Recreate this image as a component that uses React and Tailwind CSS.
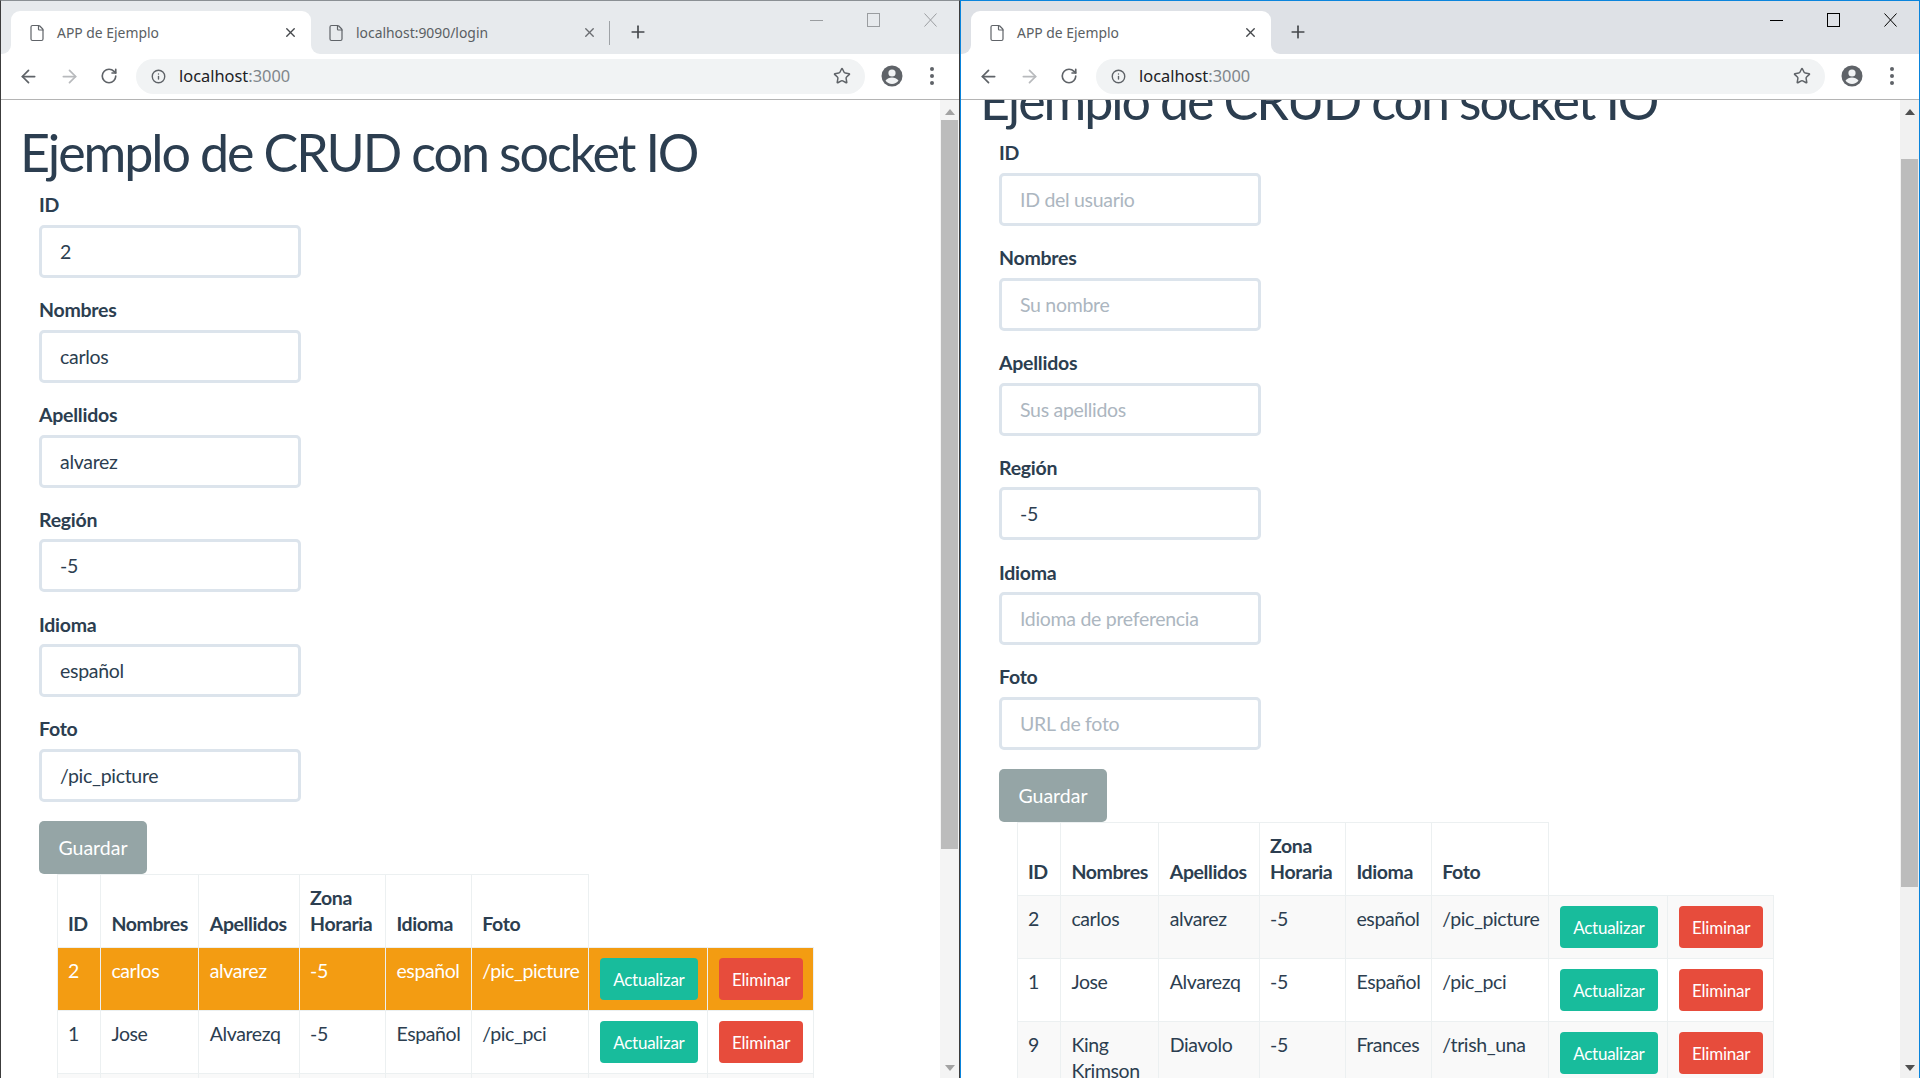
import React from "react";
import { ArrowLeft, ArrowRight, RotateCw, Info, Star, X, Plus, File } from "lucide-react";

const sans = "font-['Noto_Sans','Open_Sans',sans-serif]";

function Avatar() {
  return (
    <svg width="22" height="22" viewBox="0 0 22 22">
      <circle cx="11" cy="11" r="10.5" fill="#5f6368" />
      <circle cx="11" cy="8" r="3.6" fill="#f1f3f4" />
      <path d="M4.5 15.6c1.6-2.4 4-3.2 6.5-3.2s4.9.8 6.5 3.2c-1.5 2.2-3.8 3.4-6.5 3.4s-5-1.2-6.5-3.4z" fill="#f1f3f4" />
    </svg>
  );
}

function Dots() {
  return (
    <svg width="6" height="20" viewBox="0 0 6 20" fill="#5f6368">
      <circle cx="3" cy="3" r="2" />
      <circle cx="3" cy="10" r="2" />
      <circle cx="3" cy="17" r="2" />
    </svg>
  );
}

function Tab({ title, active, strip, closeColor }) {
  return (
    <div className={`relative h-[43px] shrink-0 flex items-center ${active ? "w-[300px] pl-[17px] bg-white rounded-t-[9px]" : "w-[298px] pl-[16px]"}`}>
      {active && (
        <>
          <span className="absolute -left-[9px] bottom-0 w-[9px] h-[9px] bg-white">
            <span className={`block w-full h-full rounded-br-[9px] ${strip}`} />
          </span>
          <span className="absolute -right-[9px] bottom-0 w-[9px] h-[9px] bg-white">
            <span className={`block w-full h-full rounded-bl-[9px] ${strip}`} />
          </span>
        </>
      )}
      <File size={18} strokeWidth={1.6} className="text-[#5f6368] shrink-0" />
      <span className={`ml-[11px] mt-[1px] text-[13.9px] text-[#5a5e63] ${sans}`}>{title}</span>
      <X size={15} strokeWidth={2.2} className={`absolute top-[14px] ${active ? "right-[13px]" : "right-[12px]"} ${closeColor}`} />
    </div>
  );
}

function Browser({ focused, tabs, plusGap }) {
  const strip = focused ? "bg-[#dee1e6]" : "bg-[#e7eaed]";
  const ctl = focused ? "#000000" : "#9a9da0";
  return (
    <div className="h-[99px] shrink-0 flex flex-col">
      <div className={`h-[53px] shrink-0 flex ${strip}`}>
        <div className="flex items-end pl-[10px]">
          <Tab title="APP de Ejemplo" active strip={strip} closeColor="text-[#45484c]" />
          {tabs && (
            <>
              <Tab title="localhost:9090/login" strip={strip} closeColor="text-[#6a6d71]" />
              <span className="w-px h-[24px] bg-[#9ea2a6] mb-[9px]" />
            </>
          )}
          <Plus size={20} strokeWidth={2} className={`mb-[12px] ${plusGap} text-[#45484c]`} />
        </div>
        <div className="ml-auto flex items-start pt-[12px] pr-[22px] gap-[44px]">
          <svg width="13" height="14" viewBox="0 0 13 14"><path d="M0 7.5h13" stroke={ctl} strokeWidth="1" /></svg>
          <svg width="13" height="14" viewBox="0 0 13 14" fill="none"><rect x="0.5" y="0.5" width="12" height="13" stroke={ctl} /></svg>
          <svg width="13" height="14" viewBox="0 0 13 14" fill="none"><path d="M0.5 0.5l12 13M12.5 0.5l-12 13" stroke={ctl} /></svg>
        </div>
      </div>
      <div className="h-[46px] shrink-0 bg-white border-b border-[#b4b4b4] flex items-center pb-[1px]">
        <div className="flex items-center pl-[17px] w-[135px] shrink-0">
          <ArrowLeft size={21} strokeWidth={2} className="text-[#5f6368]" />
          <ArrowRight size={21} strokeWidth={2} className="text-[#b8babd] ml-[20px]" />
          <RotateCw size={18} strokeWidth={2.2} className="text-[#5f6368] ml-[20px]" />
        </div>
        <div className="w-[729px] h-[35px] shrink-0 bg-[#f1f3f4] rounded-full flex items-center pl-[15px] pr-[14px]">
          <Info size={15} strokeWidth={2.2} className="text-[#5f6368] shrink-0" />
          <span className={`ml-[13px] text-[16.4px] text-[#202124] ${sans}`}>localhost<span className="text-[#80868b]">:3000</span></span>
          <Star size={18} strokeWidth={2} className="ml-auto text-[#5f6368]" />
        </div>
        <div className="ml-[16px]"><Avatar /></div>
        <div className="ml-[26px]"><Dots /></div>
      </div>
    </div>
  );
}

function Field({ label, value, placeholder }) {
  return (
    <div className="mb-[19.1px]">
      <label className="block h-[26px] mb-[6.8px] text-[19.5px] leading-[26px] font-bold tracking-[-0.25px]">{label}</label>
      <input
        readOnly
        defaultValue={value}
        placeholder={placeholder}
        className="block w-[262px] h-[53px] px-[18px] border-[3px] border-[#dce4ec] rounded-[5px] bg-white text-[19.5px] tracking-[-0.3px] text-[#2c3e50] placeholder:text-[#acb6c0] outline-none font-['Lato',sans-serif]"
      />
    </div>
  );
}

const rows = [
  ["2", "carlos", "alvarez", "-5", "español", "/pic_picture"],
  ["1", "Jose", "Alvarezq", "-5", "Español", "/pic_pci"],
  ["9", <>King<br />Krimson</>, "Diavolo", "-5", "Frances", "/trish_una"],
];

function CrudTable({ highlight }) {
  const td = "border border-[#ecf0f1] px-[10.4px] py-[10px] align-top whitespace-nowrap";
  const th = "border border-[#ecf0f1] px-[10.4px] py-[10px] align-bottom text-left font-bold whitespace-nowrap";
  return (
    <table className="table-fixed w-[757px] border-collapse text-[19.5px] leading-[26px] ml-[17.5px] tracking-[-0.4px]">
      <thead>
        <tr>
          <th className={`${th} w-[43.5px]`}>ID</th>
          <th className={`${th} w-[98.4px]`}>Nombres</th>
          <th className={`${th} w-[100.3px]`}>Apellidos</th>
          <th className={`${th} w-[86.4px]`}>Zona<br />Horaria</th>
          <th className={`${th} w-[85.9px]`}>Idioma</th>
          <th className={`${th} w-[117.5px]`}>Foto</th>
          <th className="p-0 border-0 w-[119px]" />
          <th className="p-0 border-0 w-[106px]" />
        </tr>
      </thead>
      <tbody>
        {rows.map((r, i) => {
          const on = highlight && i === 0;
          const bg = on ? "bg-[#f39c12] text-white" : i % 2 === 0 ? "bg-[#f9f9f9]" : "bg-white";
          return (
            <tr key={i} className={bg}>
              {r.map((c, j) => (
                <td key={j} className={td}>{c}</td>
              ))}
              <td className={td}>
                <button className="block w-[98px] h-[42px] rounded-[4px] bg-[#18bc9c] text-white text-[17px] tracking-[-0.25px] pt-[2px]">Actualizar</button>
              </td>
              <td className={td}>
                <button className="block w-[84.5px] h-[42px] rounded-[4px] bg-[#e74c3c] text-white text-[17px] tracking-[-0.25px] pt-[2px]">Eliminar</button>
              </td>
            </tr>
          );
        })}
      </tbody>
    </table>
  );
}

function Scrollbar({ focused, before, thumb }) {
  const arrow = focused ? "#505050" : "#a3a3a3";
  return (
    <div className={`w-[19px] shrink-0 flex flex-col items-stretch ${focused ? "bg-[#f1f1f1]" : "bg-[#f4f4f4]"}`}>
      <div className="h-[20px] shrink-0 flex items-center justify-center pt-[3px]">
        <svg width="10" height="6" viewBox="0 0 10 6"><path d="M5 0l5 6H0z" fill={arrow} /></svg>
      </div>
      <div style={{ height: before }} className="shrink-0" />
      <div style={{ height: thumb }} className="shrink-0 bg-[#bcbcbc] mx-[1px]" />
      <div className="flex-1" />
      <div className="h-[20px] shrink-0 flex items-center justify-center">
        <svg width="10" height="6" viewBox="0 0 10 6"><path d="M0 0h10L5 6z" fill={arrow} /></svg>
      </div>
    </div>
  );
}

function Page({ values, highlight, offset }) {
  const f = ["ID", "Nombres", "Apellidos", "Región", "Idioma", "Foto"];
  const ph = ["ID del usuario", "Su nombre", "Sus apellidos", "", "Idioma de preferencia", "URL de foto"];
  return (
    <div className="flex-1 min-w-0 overflow-hidden">
      <div className={`pl-[19px] text-[#2c3e50] font-['Lato',sans-serif] ${offset}`}>
        <h1 className="text-[52px] leading-[57px] font-normal tracking-[-2.1px] pt-[24px] mb-[11px]">Ejemplo de CRUD con socket IO</h1>
        <div className="pl-[19px]">
          {f.map((l, i) => (
            <Field key={l} label={l} value={values[i] || undefined} placeholder={ph[i]} />
          ))}
          <button className="block w-[108px] h-[53px] rounded-[5px] bg-[#95a5a6] text-white text-[19.5px]">Guardar</button>
          <CrudTable highlight={highlight} />
        </div>
      </div>
    </div>
  );
}

export default function App() {
  return (
    <div className="w-[1920px] h-[1078px] overflow-hidden flex bg-white">
      <div className="w-[960px] h-full flex flex-col border-t border-l border-r border-t-[#8b9094] border-l-[#3c3c3c] border-r-[#3c3c3c]">
        <Browser tabs plusGap="ml-[18px]" />
        <div className="flex-1 min-h-0 flex">
          <Page values={["2", "carlos", "alvarez", "-5", "español", "/pic_picture"]} highlight offset="" />
          <Scrollbar before={0} thumb={729} />
        </div>
      </div>
      <div className="w-[960px] h-full flex flex-col border-t border-l border-r border-[#0a84dc]">
        <Browser focused plusGap="ml-[17px]" />
        <div className="flex-1 min-h-0 flex">
          <Page values={["", "", "", "-5", "", ""]} offset="-mt-[52px]" />
          <Scrollbar focused before={39} thumb={728} />
        </div>
      </div>
    </div>
  );
}
